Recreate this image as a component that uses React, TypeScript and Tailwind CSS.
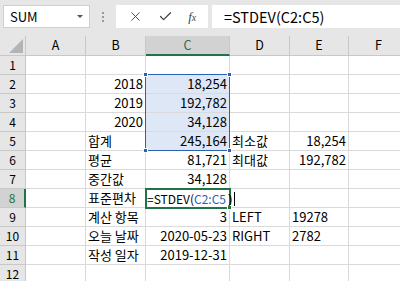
import { X, Check } from "lucide-react";

type Cell = { t?: string; r?: boolean };

const cols = ["A", "B", "C", "D", "E", "F"];
const widths = ["w-[60px]", "w-[60px]", "w-[84px]", "w-[60px]", "w-[59px]", "w-[60px]"];

const rows: Cell[][] = [
  [{}, {}, {}, {}, {}, {}],
  [{}, { t: "2018", r: true }, { t: "18,254", r: true }, {}, {}, {}],
  [{}, { t: "2019", r: true }, { t: "192,782", r: true }, {}, {}, {}],
  [{}, { t: "2020", r: true }, { t: "34,128", r: true }, {}, {}, {}],
  [{}, { t: "합계" }, { t: "245,164", r: true }, { t: "최소값" }, { t: "18,254", r: true }, {}],
  [{}, { t: "평균" }, { t: "81,721", r: true }, { t: "최대값" }, { t: "192,782", r: true }, {}],
  [{}, { t: "중간값" }, { t: "34,128", r: true }, {}, {}, {}],
  [{}, { t: "표준편차" }, {}, {}, {}, {}],
  [{}, { t: "계산 항목" }, { t: "3", r: true }, { t: "LEFT" }, { t: "19278" }, {}],
  [{}, { t: "오늘 날짜" }, { t: "2020-05-23", r: true }, { t: "RIGHT" }, { t: "2782" }, {}],
  [{}, { t: "작성 일자" }, { t: "2019-12-31", r: true }, {}, {}, {}],
  [{}, {}, {}, {}, {}, {}],
];

export default function App() {
  return (
    <div
      className="w-[400px] h-[281px] overflow-hidden bg-white text-black"
      style={{ fontFamily: '"Noto Sans CJK KR", "Noto Sans", sans-serif' }}
    >
      {/* formula bar */}
      <div className="h-[36px] bg-[#e6e6e6] flex items-start pt-[5px]">
        <div className="ml-[3px] w-[87px] h-[23px] shrink-0 bg-white border border-[#d0d0d0] flex items-center justify-between pl-[6px] pr-[6px]">
          <span className="text-[13px]">SUM</span>
          <span className="w-0 h-0 border-l-[3px] border-r-[3px] border-t-[3px] border-l-transparent border-r-transparent border-t-[#555]" />
        </div>
        <div className="w-[26px] h-[23px] shrink-0 flex flex-col items-center justify-center gap-[2px]">
          <span className="w-[2px] h-[2px] bg-[#999]" />
          <span className="w-[2px] h-[2px] bg-[#999]" />
          <span className="w-[2px] h-[2px] bg-[#999]" />
        </div>
        <div className="w-[92px] h-[23px] shrink-0 bg-white flex items-center justify-around px-[4px]">
          <X size={15} strokeWidth={1.5} className="text-[#444]" />
          <Check size={15} strokeWidth={2} className="text-[#444]" />
          <span className="text-[13px] italic text-[#444]" style={{ fontFamily: '"Liberation Serif", serif' }}>
            f<span className="text-[10px]">x</span>
          </span>
        </div>
        <div className="ml-[4px] flex-1 h-[23px] bg-white flex items-center pl-[12px] text-[14.5px]">
          =STDEV(C2:C5)
        </div>
      </div>

      {/* sheet */}
      <div className="relative">
        {/* column headers */}
        <div className="flex h-[20px] bg-[#e6e6e6] text-[12.5px]">
          <div className="w-[26px] shrink-0 relative border-r border-b border-[#c8c8c8]">
            <span
              className="absolute right-[2px] bottom-[2px] w-0 h-0"
              style={{ borderBottom: "14px solid #b4b4b4", borderLeft: "14px solid transparent" }}
            />
          </div>
          {cols.map((c, i) => (
            <div
              key={c}
              className={`${widths[i]} shrink-0 flex items-center justify-center border-r ${
                c === "C"
                  ? "bg-[#d2d2d2] border-b-2 border-b-[#217346] text-[#217346] border-r-[#c8c8c8]"
                  : "border-b border-[#c8c8c8]"
              }`}
            >
              {c}
            </div>
          ))}
        </div>

        {rows.map((row, ri) => (
          <div key={ri} className="flex h-[19px]">
            <div
              className={`w-[26px] shrink-0 flex items-center justify-center text-[12px] border-b border-[#c8c8c8] ${
                ri === 7
                  ? "bg-[#d2d2d2] text-[#217346] border-r-2 border-r-[#217346]"
                  : "bg-[#e6e6e6] border-r border-r-[#c8c8c8]"
              }`}
            >
              {ri + 1}
            </div>
            {row.map((cell, ci) => (
              <div
                key={ci}
                className={`${widths[ci]} shrink-0 flex items-center px-[2px] text-[13px] whitespace-nowrap border-r border-b border-[#dadada] ${
                  cell.r ? "justify-end" : "justify-start"
                } ${ci === 2 && ri >= 1 && ri <= 4 ? "bg-[#dde7f5]" : ""}`}
              >
                {cell.t}
              </div>
            ))}
          </div>
        ))}

        {/* selection range C2:C5 */}
        <div className="absolute left-[145px] top-[38px] w-[85px] h-[77px] border border-[#2d5fb2] pointer-events-none">
          <span className="absolute -left-[3px] -top-[3px] w-[5px] h-[5px] bg-[#2d5fb2] border border-white" />
          <span className="absolute -right-[3px] -top-[3px] w-[5px] h-[5px] bg-[#2d5fb2] border border-white" />
          <span className="absolute -left-[3px] -bottom-[3px] w-[5px] h-[5px] bg-[#2d5fb2] border border-white" />
          <span className="absolute -right-[3px] -bottom-[3px] w-[5px] h-[5px] bg-[#2d5fb2] border border-white" />
        </div>

        {/* active cell C8 with formula being typed */}
        <div className="absolute left-[145px] top-[152px] w-[86px] h-[21px] border-2 border-[#217346] bg-white">
          <span className="absolute -right-[3px] -bottom-[3px] w-[5px] h-[5px] bg-[#217346] border border-white" />
        </div>
        <div className="absolute left-[147px] top-[152px] h-[21px] flex items-center text-[12px] whitespace-nowrap">
          <span>=STDEV(</span>
          <span className="text-[#2d5fb2]">C2:C5</span>
          <span
            className="ml-[2px] text-black text-[13px]"
            style={{ fontFamily: '"Liberation Sans", Arial, sans-serif' }}
          >
            )
          </span>
          <span className="ml-[2px] w-[1px] h-[14px] bg-black" />
        </div>
      </div>
    </div>
  );
}
